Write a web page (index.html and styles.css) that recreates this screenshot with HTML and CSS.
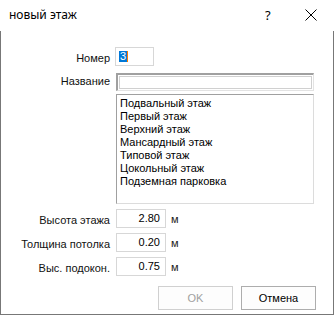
FILE: index.html
```html
<!DOCTYPE html>
<html lang="ru">
<head>
<meta charset="utf-8">
<title>новый этаж</title>
<link rel="stylesheet" href="styles.css">
</head>
<body>
<div class="window">
  <div class="titlebar">
    <span class="title">новый этаж</span>
    <span class="help">?</span>
    <span class="close">
      <svg width="12" height="12" viewBox="0 0 12 12"><path d="M0.5 0.5 L11.5 11.5 M11.5 0.5 L0.5 11.5" stroke="#000" stroke-width="1" fill="none"/></svg>
    </span>
  </div>
  <div class="body">
    <div class="form">
      <label class="label">Номер</label>
      <div class="field"><div class="edit small"><span class="sel">3</span><span class="caret"></span></div></div>

      <label class="label name-label">Название</label>
      <div class="field combo-field">
        <div class="combo"><div class="combo-inner"></div></div>
        <ul class="list">
          <li>Подвальный этаж</li>
          <li>Первый этаж</li>
          <li>Верхний этаж</li>
          <li>Мансардный этаж</li>
          <li>Типовой этаж</li>
          <li>Цокольный этаж</li>
          <li>Подземная парковка</li>
        </ul>
      </div>

      <label class="label">Высота этажа</label>
      <div class="field"><div class="edit value">2.80</div><span class="unit">м</span></div>

      <label class="label">Толщина потолка</label>
      <div class="field"><div class="edit value">0.20</div><span class="unit">м</span></div>

      <label class="label">Выс. подокон.</label>
      <div class="field"><div class="edit value">0.75</div><span class="unit">м</span></div>
    </div>
    <div class="buttons">
      <button class="btn disabled">OK</button>
      <button class="btn">Отмена</button>
    </div>
  </div>
</div>
</body>
</html>
```
FILE: styles.css
```css
html, body {
  margin: 0;
  padding: 0;
  background: #fff;
}
.window {
  width: 334px;
  height: 315px;
  display: flex;
  flex-direction: column;
  font-family: "Liberation Sans", Arial, sans-serif;
  font-size: 11px;
  color: #000;
  box-sizing: border-box;
}
.titlebar {
  height: 31px;
  flex: none;
  display: flex;
  align-items: center;
  padding-left: 9px;
  box-sizing: border-box;
  padding-bottom: 2px;
}
.title {
  font-family: "Noto Sans", "Open Sans", sans-serif;
  font-size: 12px;
  flex: 1;
}
.help {
  font-family: "Noto Sans", sans-serif;
  font-size: 13px;
  width: 12px;
  margin-right: 28px;
}
.close {
  width: 12px;
  height: 12px;
  margin-right: 17px;
  display: flex;
}
.body {
  flex: 1;
  border: 1px solid #777;
  border-top: none;
  display: flex;
  flex-direction: column;
  padding-top: 16px;
}
.form {
  display: grid;
  grid-template-columns: 109px 1fr;
  column-gap: 6px;
  row-gap: 5px;
  align-items: center;
}
.label {
  text-align: right;
  padding-top: 2px;
  color: #111;
}
.name-label {
  align-self: start;
  padding-top: 4px;
}
.field {
  display: flex;
  align-items: center;
  padding-right: 19px;
}
.combo-field {
  flex-direction: column;
  align-items: stretch;
  margin-top: 2px;
}
.edit {
  height: 19px;
  box-sizing: border-box;
  border: 1px solid #d7d7d7;
  background: #fff;
}
.small {
  width: 39px;
  margin-left: -1px;
  display: flex;
  align-items: center;
  padding-left: 3px;
}
.sel {
  background: #0078d7;
  color: #fff;
  line-height: 11px;
  padding: 0 1px;
}
.caret {
  width: 1px;
  height: 11px;
  background: #ff7a00;
}
.combo {
  height: 18px;
  box-sizing: border-box;
  border-top: 2px solid #a0a0a0;
  border-left: 2px solid #a0a0a0;
  border-right: 1px solid #e3e3e3;
  border-bottom: 1px solid #e3e3e3;
  padding: 1px;
}
.combo-inner {
  height: 100%;
  box-sizing: border-box;
  border: 1px solid #d0d0d0;
  background: #fff;
}
.list {
  list-style: none;
  margin: 3px 0 0 0;
  padding: 2px 0 0 3px;
  height: 110px;
  box-sizing: border-box;
  border-top: 1px solid #a0a0a0;
  border-left: 1px solid #a0a0a0;
  border-right: 1px solid #dcdcdc;
  border-bottom: 1px solid #dcdcdc;
}
.list li {
  line-height: 13px;
  height: 13px;
  white-space: nowrap;
}
.value {
  width: 50px;
  text-align: right;
  padding-right: 5px;
  line-height: 17px;
}
.unit {
  margin-left: 5px;
  color: #222;
}
.buttons {
  display: flex;
  justify-content: flex-end;
  gap: 8px;
  padding-right: 17px;
  margin-top: 10px;
}
.btn {
  width: 75px;
  height: 24px;
  font-family: "Liberation Sans", Arial, sans-serif;
  font-size: 11px;
  background: #fdfdfd;
  border: 1px solid #adadad;
  color: #000;
  padding: 0;
}
.btn.disabled {
  color: #a0a0a0;
  border-color: #d0d0d0;
}
```
